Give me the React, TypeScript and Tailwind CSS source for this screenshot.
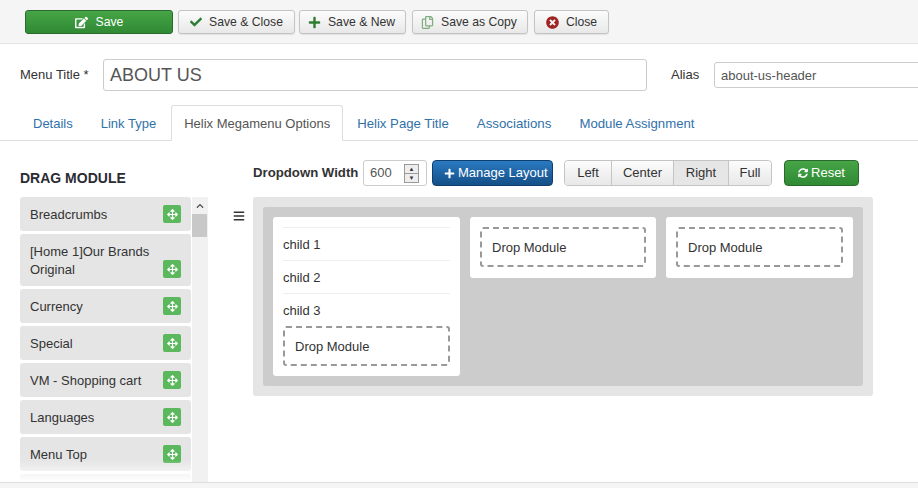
import React from "react";
import { FaEdit, FaCheck, FaPlus, FaRegCopy, FaTimesCircle, FaSyncAlt, FaArrowsAlt, FaBars, FaChevronUp } from "react-icons/fa";

const btn = "h-[24px] flex items-center justify-center gap-[7px] rounded-[3px] border border-[#c4c4c4] bg-gradient-to-b from-[#fcfcfc] to-[#e8e8e8] text-[12.2px] text-[#333] shadow-[0_1px_1px_rgba(0,0,0,0.08)]";

function Tool({ w, icon, label }: { w: string; icon: React.ReactNode; label: string }) {
  return (
    <div className={`${btn} ${w}`}>
      {icon}
      <span>{label}</span>
    </div>
  );
}

function Item({ label, tall }: { label: React.ReactNode; tall?: boolean }) {
  return (
    <div className={`flex shrink-0 justify-between rounded-[3px] bg-[#e5e5e5] pl-[10px] pr-[10px] text-[13px] text-[#333] ${tall ? "h-[52px] items-end pb-[8px]" : "h-[34px] items-center"}`}>
      <span className={tall ? "mb-[-1px] leading-[18px]" : "pt-[2px]"}>{label}</span>
      <span className="flex h-[18px] w-[18px] items-center justify-center rounded-[2px] bg-[#5cb85c] text-white">
        <FaArrowsAlt size={11} />
      </span>
    </div>
  );
}

function Drop() {
  return (
    <div className="flex h-[40px] items-center rounded-[3px] border-2 border-dashed border-[#999] pl-[10px] pt-[1px] text-[13px] text-[#333]">
      Drop Module
    </div>
  );
}

const seg = "flex items-center justify-center bg-gradient-to-b from-[#fcfcfc] to-[#e8e8e8]";
const tab = "flex items-center px-[14px] pt-[2px]";

export default function App() {
  return (
    <div className="flex h-[488px] w-[918px] flex-col overflow-hidden bg-white font-['Liberation_Sans',Arial,sans-serif] text-[13px] text-[#333]">
      <div className="flex h-[44px] shrink-0 items-start gap-[5px] border-b border-[#e3e3e3] bg-[#f5f5f5] pl-[25px] pt-[10px]">
        <div className="flex h-[24px] w-[148px] items-center justify-center gap-[8px] rounded-[3px] border border-[#2a6a2e] bg-gradient-to-b from-[#46a546] to-[#2f8a34] text-[12.2px] text-white">
          <FaEdit size={13} />
          <span>Save</span>
        </div>
        <Tool w="w-[117px]" icon={<FaCheck size={12} className="text-[#2f7d32]" />} label="Save & Close" />
        <Tool w="w-[107px] ml-[-1px] pr-[2px]" icon={<FaPlus size={13} className="text-[#2f7d32]" />} label="Save & New" />
        <Tool w="w-[116px] ml-[1px] pr-[2px]" icon={<FaRegCopy size={13} className="text-[#7fae7f]" />} label="Save as Copy" />
        <Tool w="w-[75px] ml-[1px]" icon={<FaTimesCircle size={13} className="text-[#a02323]" />} label="Close" />
      </div>

      <div className="flex shrink-0 items-center pl-[20px] pt-[15px]">
        <span className="w-[83px] shrink-0 text-[13px]">Menu Title *</span>
        <div className="flex h-[32px] w-[544px] shrink-0 items-center rounded-[3px] border border-[#ccc] pl-[6px] pt-[1px] text-[18px] text-[#555]">ABOUT US</div>
        <span className="ml-[24px] w-[43px] shrink-0 text-[13px]">Alias</span>
        <div className="flex h-[26px] w-[220px] shrink-0 items-center rounded-[3px] border border-[#ccc] pl-[6px] pt-[1px] text-[13px] text-[#555]">about-us-header</div>
      </div>

      <div className="mt-[14px] flex h-[36px] shrink-0 items-stretch border-b border-[#ddd] pl-[19px] text-[13px] text-[#3071a9]">
        <span className={tab}>Details</span>
        <span className={tab}>Link Type</span>
        <span className="mb-[-1px] ml-[1px] flex items-center rounded-t-[3px] border border-[#ddd] border-b-white bg-white px-[12px] pt-[2px] text-[#555]">Helix Megamenu Options</span>
        <span className={`${tab} text-[13.2px]`}>Helix Page Title</span>
        <span className={`${tab} text-[13.3px]`}>Associations</span>
        <span className={`${tab} text-[13.2px]`}>Module Assignment</span>
      </div>

      <div className="flex min-h-0 flex-1">
        <div className="flex w-[253px] shrink-0 flex-col pl-[20px] pt-[29px]">
          <div className="text-[14px] font-bold leading-[16px] text-[#2b2b33]">DRAG MODULE</div>
          <div className="mt-[11px] flex min-h-0 flex-1 items-stretch">
            <div className="relative flex w-[171px] flex-col gap-[3px] overflow-hidden">
              <Item label="Breadcrumbs" />
              <Item tall label={<>[Home 1]Our Brands<br />Original</>} />
              <Item label="Currency" />
              <Item label="Special" />
              <Item label="VM - Shopping cart" />
              <Item label="Languages" />
              <Item label="Menu Top" />
              <Item label="" />
              <div className="absolute bottom-0 left-0 right-0 h-[22px] bg-gradient-to-b from-transparent to-white" />
            </div>
            <div className="ml-[1px] w-[16px] bg-[#f1f1f1]">
              <div className="flex h-[17px] items-center justify-center text-[#505050]"><FaChevronUp size={8} /></div>
              <div className="h-[23px] w-[15px] bg-[#c8c8c8]" />
            </div>
            <div className="flex w-[45px] justify-start pl-[25px] pt-[13px]"><FaBars size={12} className="text-[#333]" /></div>
          </div>
        </div>

        <div className="flex flex-col pt-[19px]">
          <div className="flex h-[26px] items-center">
            <span className="w-[110px] shrink-0 text-[13.2px] font-bold">Dropdown Width</span>
            <div className="flex h-[26px] w-[64px] items-center justify-between rounded-[3px] border border-[#ccc] pl-[6px] pr-[7px] text-[13px] text-[#555]">
              600
              <span className="flex flex-col text-[6px] leading-[8px] text-[#333]">
                <span className="flex h-[10px] w-[15px] items-center justify-center border border-[#999] bg-[#eee]">▲</span>
                <span className="mt-[-1px] flex h-[10px] w-[15px] items-center justify-center border border-[#999] bg-[#eee]">▼</span>
              </span>
            </div>
            <div className="ml-[5px] flex h-[26px] w-[121px] items-center justify-start gap-[3px] rounded-[4px] border border-[#0e3f6f] bg-gradient-to-b from-[#2a7ac2] to-[#144f87] pl-[11px] text-[13px] text-white">
              <FaPlus size={11} />
              <span>Manage Layout</span>
            </div>
            <div className="ml-[11px] flex h-[26px] rounded-[4px] border border-[#c4c4c4] text-[13px]">
              <span className={`${seg} w-[46px] rounded-l-[4px]`}>Left</span>
              <span className={`${seg} w-[62px] border-l border-[#c4c4c4]`}>Center</span>
              <span className="flex w-[55px] items-center justify-center border-l border-[#c4c4c4] bg-[#e6e6e6]">Right</span>
              <span className={`${seg} w-[43px] rounded-r-[4px] border-l border-[#c4c4c4]`}>Full</span>
            </div>
            <div className="ml-[12px] flex h-[26px] w-[75px] items-center justify-center gap-[3px] rounded-[4px] border border-[#2a6a2e] bg-gradient-to-b from-[#46a546] to-[#2f8a34] text-[13px] text-white">
              <FaSyncAlt size={10} />
              <span>Reset</span>
            </div>
          </div>

          <div className="mt-[11px] h-[199px] w-[620px] rounded-[3px] bg-[#e5e5e5] p-[10px]">
            <div className="flex h-[179px] items-start gap-[10px] rounded-[3px] bg-[#ccc] p-[10px]">
              <div className="h-[159px] w-[187px] rounded-[3px] bg-white px-[10px] pt-[10px] text-[13px]">
                <div className="flex h-[33px] items-center border-t border-[#eee] pt-[1px]">child 1</div>
                <div className="flex h-[33px] items-center border-t border-[#eee] pt-[1px]">child 2</div>
                <div className="flex h-[33px] items-center border-t border-[#eee] pt-[1px]">child 3</div>
                <Drop />
              </div>
              <div className="h-[61px] w-[186px] rounded-[3px] bg-white px-[10px] pt-[10px]"><Drop /></div>
              <div className="h-[61px] w-[187px] rounded-[3px] bg-white px-[10px] pt-[10px]"><Drop /></div>
            </div>
          </div>
        </div>
      </div>

      <div className="h-[6px] shrink-0 border-t border-[#ddd] bg-[#f5f5f5]" />
    </div>
  );
}
